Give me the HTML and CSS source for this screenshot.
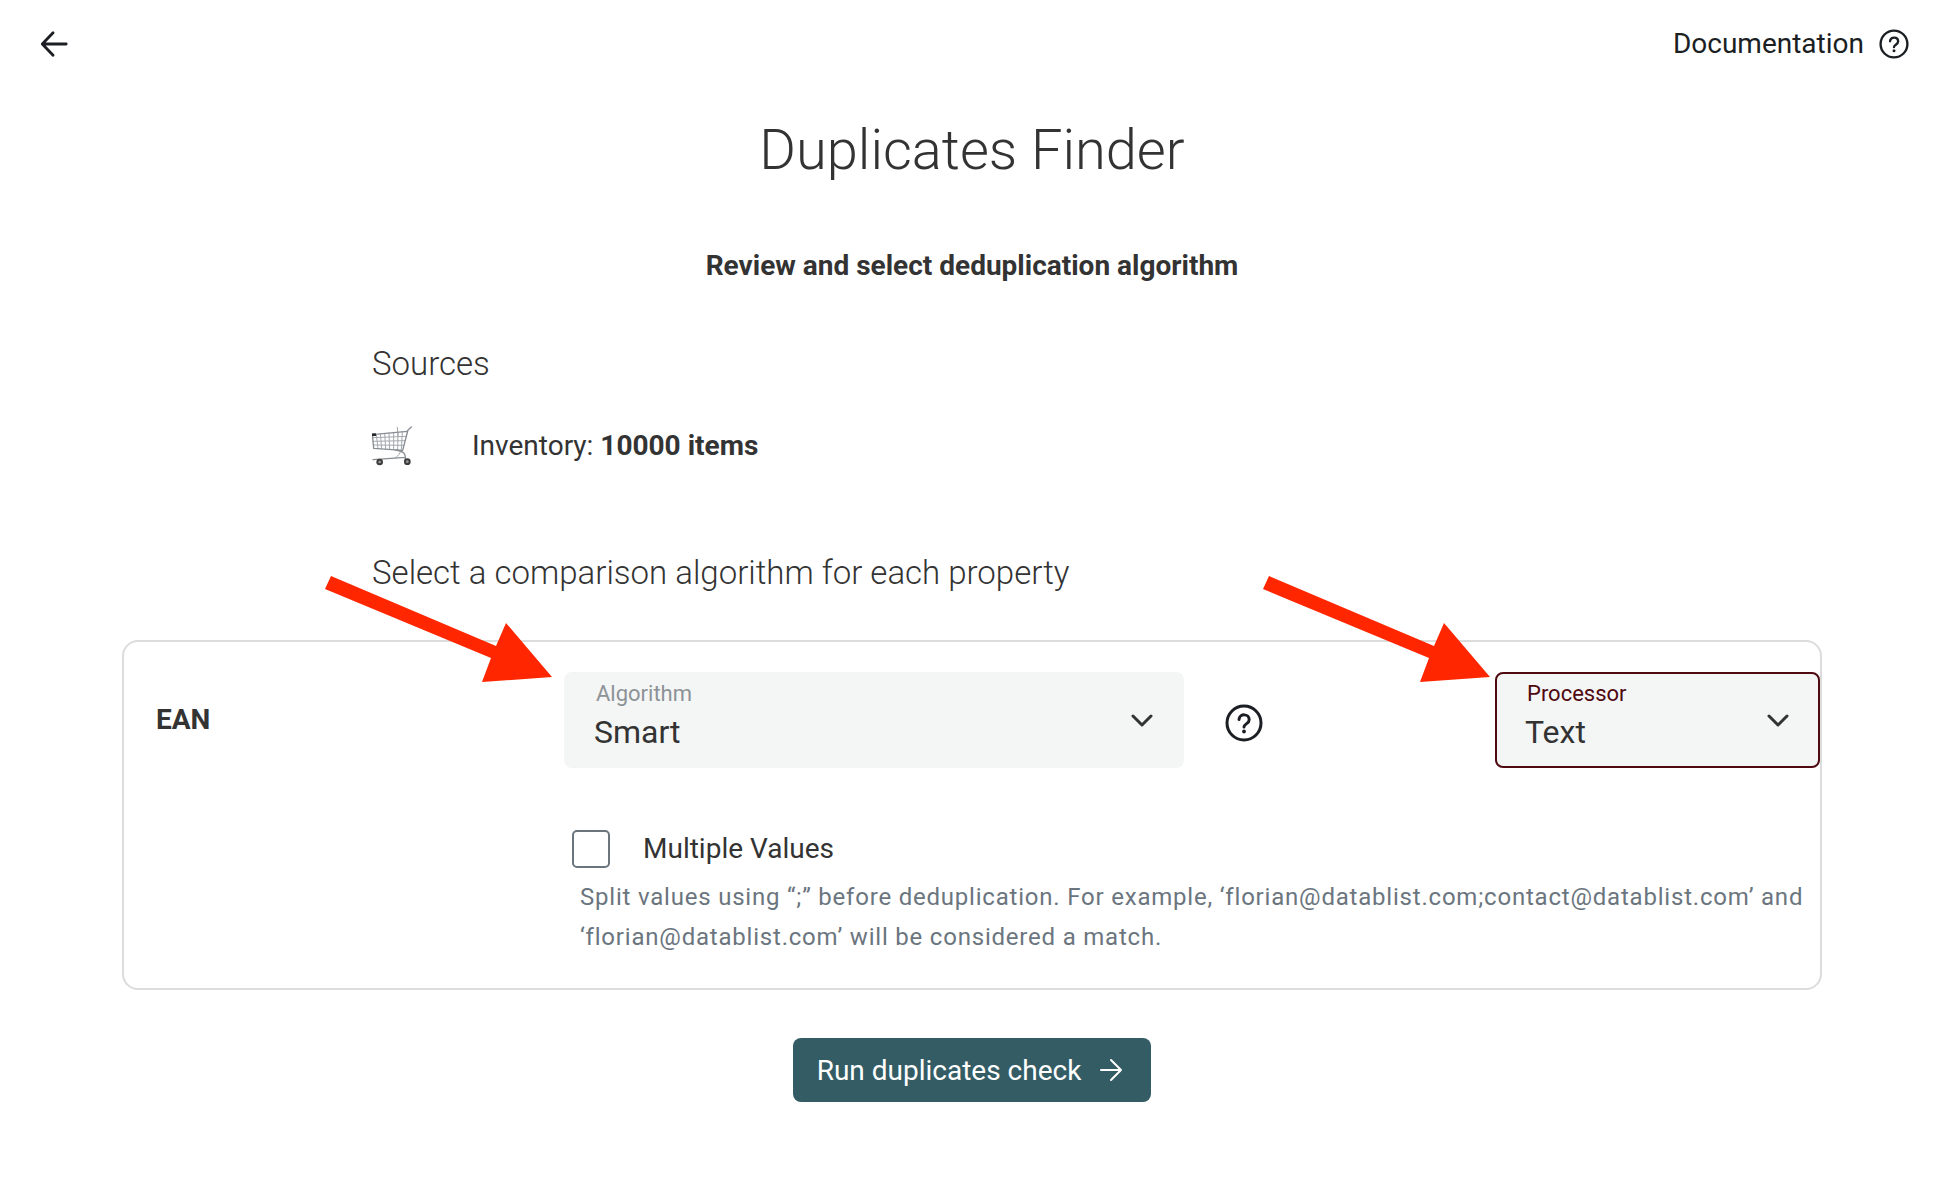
FILE: index.html
```html
<!DOCTYPE html>
<html lang="en">
  <head>
    <meta charset="UTF-8" />
    <meta name="viewport" content="width=device-width, initial-scale=1.0" />
    <title>Duplicates Finder</title>
    <link rel="stylesheet" href="styles.css">
  </head>
  <body>
    <header class="topbar">
      <button class="icon-button" type="button" aria-label="Back">
        <svg class="icon-back" viewBox="0 0 32 32">
          <path d="M29 16H4M15 4L3.500 16L15 28" />
        </svg>
      </button>
      <a class="doc-link" href="#">
        Documentation
        <svg class="icon-help" viewBox="0 0 38 38">
          <circle cx="19" cy="19" r="17" />
          <path d="M14 15.500c.6-6.200 10.200-6.200 10.200.2 0 4-5.200 4.200-5.200 7.200" />
          <circle class="dot" cx="19" cy="27.500" r="1.900" />
        </svg>
      </a>
    </header>

    <main class="page">
      <h1 class="title">Duplicates Finder</h1>
      <h2 class="subtitle">Review and select deduplication algorithm</h2>

      <section class="intro">
        <h3 class="section-title">Sources</h3>
        <div class="source">
          <svg class="icon-cart" viewBox="0 0 120 120">
            <g class="cart-wire">
              <path d="M13 25L18 67M25 24L29 68M38 22L41 69M51 21L53 70M65 20L65 71M78 19L77 72M91 18L88 72" />
              <path d="M3 35L102 31M4 46L99 44M5 57L95 58" />
              <path d="M76 4L78 30M80 72C92 76 80 88 70 96" />
            </g>
            <g class="cart-frame">
              <path d="M118 3L108 12L92 73L5 67L1 26L105 16" />
              <path d="M70 72C96 76 102 82 100 104M3 101L100 94" />
            </g>
            <rect x="0" y="22" width="12" height="8" fill="#24292d" stroke="none" />
            <g stroke="none">
              <circle cx="23" cy="108" r="10" fill="#3c3c3c" />
              <circle cx="23" cy="108" r="4" fill="#999" />
              <circle cx="106" cy="107" r="10" fill="#3c3c3c" />
              <circle cx="106" cy="107" r="4" fill="#999" />
            </g>
          </svg>
          <span>Inventory: <strong>10000 items</strong></span>
        </div>
        <h3 class="section-title">Select a comparison algorithm for each property</h3>
      </section>

      <form class="card">
        <div class="property-row">
          <strong class="property-name">EAN</strong>

          <div class="field">
            <label class="field-label" for="algorithm">Algorithm</label>
            <select class="field-select" id="algorithm">
              <option>Smart</option>
            </select>
            <svg class="chevron" viewBox="0 0 22 14">
              <path d="M2 2L11 11L20 2" />
            </svg>
            <svg class="pointer" viewBox="0 0 228 108">
              <path d="M6 0L171 70L181 47L227 101L157 106L166 82L0 13Z" />
            </svg>
          </div>

          <button class="icon-button help-button" type="button" aria-label="Help">
            <svg class="icon-help icon-help-large" viewBox="0 0 38 38">
              <circle cx="19" cy="19" r="17" />
              <path d="M14 15.500c.6-6.200 10.200-6.200 10.200.2 0 4-5.200 4.200-5.200 7.200" />
              <circle class="dot" cx="19" cy="27.500" r="1.900" />
            </svg>
          </button>

          <div class="field field-active">
            <label class="field-label" for="processor">Processor</label>
            <select class="field-select" id="processor">
              <option>Text</option>
            </select>
            <svg class="chevron" viewBox="0 0 22 14">
              <path d="M2 2L11 11L20 2" />
            </svg>
            <svg class="pointer" viewBox="0 0 228 108">
              <path d="M6 0L171 70L181 47L227 101L157 106L166 82L0 13Z" />
            </svg>
          </div>
        </div>

        <div class="option">
          <div class="option-check">
            <input class="checkbox" type="checkbox" id="multiple" />
            <label for="multiple">Multiple Values</label>
          </div>
          <p class="hint">
            Split values using “;” before deduplication. For example,
            ‘florian@datablist.com;contact@datablist.com’ and
            ‘florian@datablist.com’ will be considered a match.
          </p>
        </div>
      </form>

      <button class="run-button" type="button">
        Run duplicates check
        <svg class="icon-next" viewBox="0 0 24 24">
          <path d="M2 12H22M12 2L22 12L12 22" />
        </svg>
      </button>
    </main>
  </body>
</html>
```
FILE: styles.css
```css
* {
  box-sizing: border-box;
}
body {
  margin: 0;
  background: #fff;
  color: #333;
  font-family: Roboto, "Liberation Sans", sans-serif;
  font-size: 28px;
  line-height: 40px;
}
h1,
h2,
h3,
p {
  margin: 0;
}
svg {
  display: block;
  fill: none;
  stroke: currentColor;
  stroke-width: 3;
  stroke-linecap: round;
  stroke-linejoin: round;
}

/* Top bar */
.topbar {
  display: flex;
  align-items: center;
  justify-content: space-between;
  height: 88px;
  padding: 0 39px;
  color: #1b1f23;
}
.icon-button {
  padding: 0;
  border: none;
  background: none;
  color: #1b1f23;
  cursor: pointer;
}
.icon-back {
  width: 30px;
  height: 30px;
}
.doc-link {
  display: flex;
  align-items: center;
  gap: 15px;
  color: inherit;
  text-decoration: none;
}
.icon-help {
  width: 30px;
  height: 30px;
}
.icon-help .dot {
  fill: currentColor;
  stroke: none;
}
.icon-help-large {
  width: 38px;
  height: 38px;
}

/* Page */
.page {
  display: flex;
  flex-direction: column;
  align-items: center;
  padding: 26px 4px 60px 0;
}
.title {
  font-size: 56px;
  font-weight: 300;
  line-height: 72px;
}
.subtitle {
  margin-top: 60px;
  font-size: 28px;
  font-weight: 700;
}
.intro {
  width: 100%;
  max-width: 1200px;
  margin-top: 58px;
}
.section-title {
  font-size: 33px;
  font-weight: 300;
}
.source {
  display: flex;
  align-items: center;
  gap: 60px;
  margin: 42px 0 87px;
}
.icon-cart {
  width: 40px;
  height: 40px;
}
.cart-wire {
  stroke: #a3a9ae;
  stroke-width: 3;
}
.cart-frame {
  stroke: #888e93;
  stroke-width: 4;
}

/* Property card */
.card {
  width: 100%;
  max-width: 1700px;
  margin-top: 47px;
  padding: 30px 0 31px 32px;
  border: 2px solid #dcdcdc;
  border-radius: 16px;
}
.property-row {
  display: grid;
  grid-template-columns: 408px 620px 1fr 325px;
  align-items: center;
}
.help-button {
  justify-self: start;
  margin-left: 41px;
  padding-top: 6px;
}
.field {
  position: relative;
}
.field-label {
  position: absolute;
  top: 6px;
  left: 32px;
  color: #8d9297;
  font-size: 22px;
  line-height: 32px;
  pointer-events: none;
}
.field-select {
  display: block;
  width: 100%;
  height: 96px;
  padding: 24px 64px 0 28px;
  border: 2px solid #f4f6f5;
  border-radius: 8px;
  outline: none;
  background: #f4f6f5;
  color: #333;
  font-family: inherit;
  font-size: 32px;
  appearance: none;
}
.field-active .field-label {
  color: #4f0911;
}
.field-active .field-select {
  border-color: #4f0911;
}
.chevron {
  position: absolute;
  top: 42px;
  right: 31px;
  width: 22px;
  height: 14px;
  pointer-events: none;
}
.pointer {
  position: absolute;
  top: -96px;
  right: calc(100% + 11px);
  width: 228px;
  height: 108px;
  fill: #ff2600;
  stroke: none;
  pointer-events: none;
}
.field-active .pointer {
  right: calc(100% + 4px);
}
.option {
  margin: 62px 0 0 416px;
}
.option-check {
  display: flex;
  align-items: center;
  gap: 33px;
  height: 38px;
}
.checkbox {
  width: 38px;
  height: 38px;
  margin: 0;
  border: 2px solid #6b757e;
  border-radius: 5px;
  background: #fff;
  appearance: none;
}
.checkbox:checked {
  background: #345c65;
}
.hint {
  margin: 9px 0 0 8px;
  color: #6b757e;
  font-size: 24px;
  letter-spacing: 0.033em;
}

.run-button {
  display: flex;
  align-items: center;
  gap: 18px;
  height: 64px;
  margin-top: 48px;
  padding: 0 28px 0 24px;
  border: none;
  border-radius: 8px;
  background: #345c65;
  color: #fff;
  font-family: inherit;
  font-size: 28px;
  cursor: pointer;
}
.run-button:hover {
  background: #2c4f57;
}
.icon-next {
  width: 24px;
  height: 24px;
  stroke-width: 2;
}
```
